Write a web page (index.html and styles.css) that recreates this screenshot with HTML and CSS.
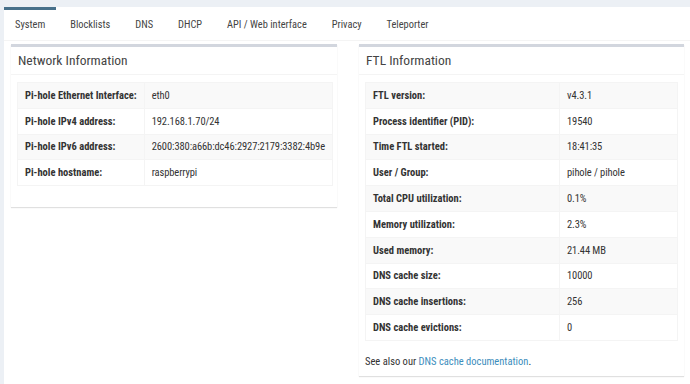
FILE: index.html
```html
<!DOCTYPE html>
<html lang="en">
<head>
  <meta charset="UTF-8">
  <title>Pi-hole Settings</title>
  <link rel="stylesheet" href="styles.css">
</head>
<body>

  <div class="nav-tabs-custom">
    <div class="tabs">
      <div class="tab active">System</div>
      <div class="tab">Blocklists</div>
      <div class="tab">DNS</div>
      <div class="tab">DHCP</div>
      <div class="tab">API / Web interface</div>
      <div class="tab">Privacy</div>
      <div class="tab">Teleporter</div>
    </div>

    <div class="tab-content">
      <div class="box">
        <div class="box-header">Network Information</div>
        <div class="box-body">
          <table class="info-table net">
            <tr><th>Pi-hole Ethernet Interface:</th><td>eth0</td></tr>
            <tr><th>Pi-hole IPv4 address:</th><td>192.168.1.70/24</td></tr>
            <tr><th>Pi-hole IPv6 address:</th><td>2600:380:a66b:dc46:2927:2179:3382:4b9e</td></tr>
            <tr><th>Pi-hole hostname:</th><td>raspberrypi</td></tr>
          </table>
        </div>
      </div>

      <div class="box">
        <div class="box-header">FTL Information</div>
        <div class="box-body">
          <table class="info-table ftl">
            <tr><th>FTL version:</th><td>v4.3.1</td></tr>
            <tr><th>Process identifier (PID):</th><td>19540</td></tr>
            <tr><th>Time FTL started:</th><td>18:41:35</td></tr>
            <tr><th>User / Group:</th><td>pihole / pihole</td></tr>
            <tr><th>Total CPU utilization:</th><td>0.1%</td></tr>
            <tr><th>Memory utilization:</th><td>2.3%</td></tr>
            <tr><th>Used memory:</th><td>21.44 MB</td></tr>
            <tr><th>DNS cache size:</th><td>10000</td></tr>
            <tr><th>DNS cache insertions:</th><td>256</td></tr>
            <tr><th>DNS cache evictions:</th><td>0</td></tr>
          </table>
          <p class="note">See also our <a href="#">DNS cache documentation</a>.</p>
        </div>
      </div>
    </div>
  </div>

</body>
</html>
```

FILE: styles.css
```css
body {
  margin: 0;
  font-family: 'Roboto Condensed', 'Roboto', sans-serif;
  background-color: #ecf0f5;
  color: #333;
}
.nav-tabs-custom {
  margin: 7px 0 0 4px;
  background: #fff;
  height: 377px;
}
.tabs {
  display: flex;
  height: 33px;
  border-bottom: 1px solid #f4f4f4;
}
.tab {
  padding: 0 11px;
  margin-right: 3px;
  border-top: 3px solid transparent;
  line-height: 29px;
  font-size: 10.4px;
  color: #444;
}
.tab.active {
  border-top-color: #47708a;
}
.tab-content {
  display: grid;
  grid-template-columns: 326px 325px;
  gap: 22px;
  align-items: start;
  padding: 3px 0 0 7px;
}
.box {
  background: #fff;
  border-top: 3px solid #d2d6de;
  box-shadow: 0 1px 1px rgba(0,0,0,0.12);
}
.box-header {
  height: 27px;
  line-height: 27px;
  padding: 0 7px;
  font-size: 13.5px;
  color: #444;
  border-bottom: 1px solid #f4f4f4;
}
.box-body {
  padding: 7px 6px;
}
.info-table {
  width: 100%;
  border-collapse: collapse;
  border: 1px solid #f4f4f4;
  margin-bottom: 14px;
  font-size: 10.5px;
}
.info-table th,
.info-table td {
  height: 24.8px;
  padding: 0 7px;
  text-align: left;
  white-space: nowrap;
  border: 1px solid #f4f4f4;
}
.info-table td {
  letter-spacing: -0.1px;
}
.info-table th {
  font-weight: bold;
}
.info-table tr:nth-child(odd) {
  background: #f9f9f9;
}
.info-table.net th {
  width: 115px;
}
.info-table.ftl th {
  width: 179px;
}
.note {
  margin: 0;
  font-size: 10.5px;
  line-height: 14px;
}
.note a {
  color: #3c8dbc;
  text-decoration: none;
}
```
